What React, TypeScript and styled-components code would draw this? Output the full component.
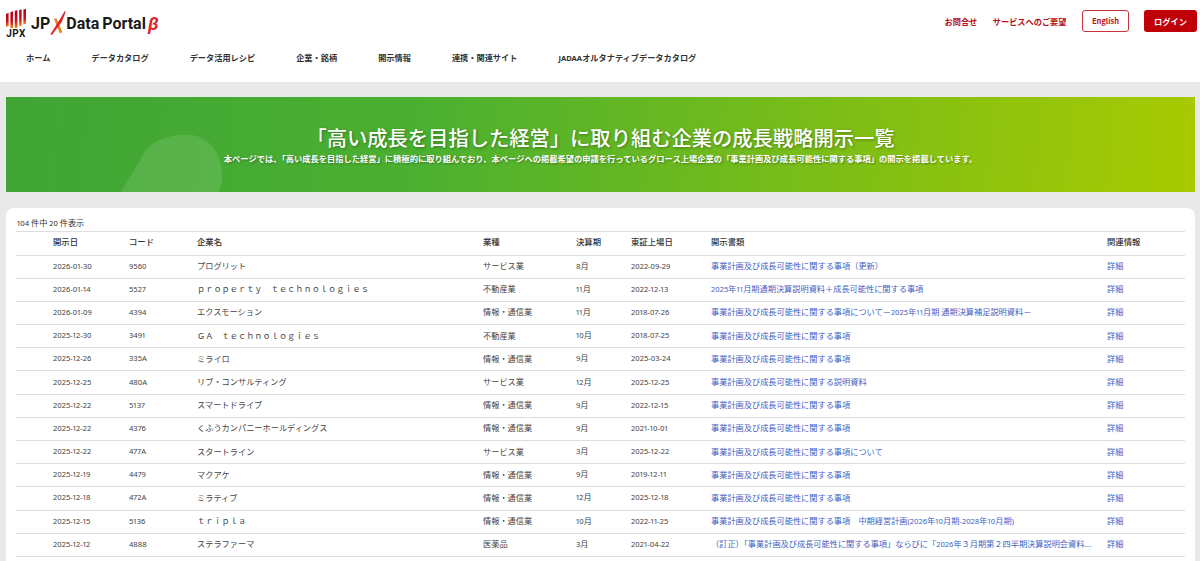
import React from "react";
import styled, { createGlobalStyle } from "styled-components";

const rows = [
  ["2026-01-30", "9560", "プログリット", "サービス業", "8月", "2022-09-29", "事業計画及び成長可能性に関する事項（更新）"],
  ["2026-01-14", "5527", "ｐｒｏｐｅｒｔｙ　ｔｅｃｈｎｏｌｏｇｉｅｓ", "不動産業", "11月", "2022-12-13", "2025年11月期通期決算説明資料＋成長可能性に関する事項"],
  ["2026-01-09", "4394", "エクスモーション", "情報・通信業", "11月", "2018-07-26", "事業計画及び成長可能性に関する事項について－2025年11月期 通期決算補足説明資料－"],
  ["2025-12-30", "3491", "ＧＡ　ｔｅｃｈｎｏｌｏｇｉｅｓ", "不動産業", "10月", "2018-07-25", "事業計画及び成長可能性に関する事項"],
  ["2025-12-26", "335A", "ミライロ", "情報・通信業", "9月", "2025-03-24", "事業計画及び成長可能性に関する事項"],
  ["2025-12-25", "480A", "リブ・コンサルティング", "サービス業", "12月", "2025-12-25", "事業計画及び成長可能性に関する説明資料"],
  ["2025-12-22", "5137", "スマートドライブ", "情報・通信業", "9月", "2022-12-15", "事業計画及び成長可能性に関する事項"],
  ["2025-12-22", "4376", "くふうカンパニーホールディングス", "情報・通信業", "9月", "2021-10-01", "事業計画及び成長可能性に関する事項"],
  ["2025-12-22", "477A", "スタートライン", "サービス業", "3月", "2025-12-22", "事業計画及び成長可能性に関する事項について"],
  ["2025-12-19", "4479", "マクアケ", "情報・通信業", "9月", "2019-12-11", "事業計画及び成長可能性に関する事項"],
  ["2025-12-18", "472A", "ミラティブ", "情報・通信業", "12月", "2025-12-18", "事業計画及び成長可能性に関する事項"],
  ["2025-12-15", "5136", "ｔｒｉｐｌａ", "情報・通信業", "10月", "2022-11-25", "事業計画及び成長可能性に関する事項　中期経営計画(2026年10月期-2028年10月期)"],
  ["2025-12-12", "4888", "ステラファーマ", "医薬品", "3月", "2021-04-22", "（訂正）「事業計画及び成長可能性に関する事項」ならびに「2026年３月期第２四半期決算説明会資料..."],
];

const heads = ["開示日", "コード", "企業名", "業種", "決算期", "東証上場日", "開示書類", "関連情報"];
const widths = [113, 68, 286, 93, 55, 80, 396, 78];
const navItems = ["ホーム", "データカタログ", "データ活用レシピ", "企業・銘柄", "開示情報", "連携・関連サイト", "JADAAオルタナティブデータカタログ"];

// latin and digits sit in a smaller proportional face than the kana
const withNums = (text: string) =>
  text.split(/([0-9A-Z()\-]+)/).map((part, i) =>
    i % 2 === 1 ? <Num key={i}>{part}</Num> : part
  );

const App = () => {
  return (
    <>
      <GlobalStyle />
      <Header>
        <TopBar>
          <LogoBox>
            <JpxMark>
              <svg width="20" height="19" viewBox="0 0 20 19">
                <defs>
                  <linearGradient id="jpxGrad" x1="0" y1="0" x2="0" y2="1">
                    <stop offset="0" stopColor="#b0001c" />
                    <stop offset="0.6" stopColor="#c8101c" />
                    <stop offset="1" stopColor="#f08a1e" />
                  </linearGradient>
                </defs>
                <path d="M0 5 L2.6 3.8 L2.6 17 L0 18 Z" fill="url(#jpxGrad)" />
                <path d="M4.4 3.2 L7 2.2 L7 19 L4.4 19 Z" fill="url(#jpxGrad)" />
                <path d="M8.8 1.8 L11.4 1.2 L11.4 19 L8.8 19 Z" fill="url(#jpxGrad)" />
                <path d="M13.2 1 L15.6 0.6 L15.6 16.5 L13.2 17.5 Z" fill="url(#jpxGrad)" />
                <path d="M17.4 0.4 L20 0 L20 14.5 L17.4 15.5 Z" fill="url(#jpxGrad)" />
              </svg>
              <JpxLabel>JPX</JpxLabel>
            </JpxMark>
            <LogoText>JP</LogoText>
            <CrossMark>
              <svg width="20" height="31" viewBox="0 0 20 31">
                <path d="M5 10 L8 9 L15.5 26 L12.5 28 Z" fill="#e8861c" />
                <path d="M18.5 0 L19.5 1.5 L14.5 14 L2.5 30 L0.5 29 L11 12.5 Z" fill="#e1232b" />
              </svg>
            </CrossMark>
            <LogoText>Data Portal</LogoText>
            <BetaText>β</BetaText>
          </LogoBox>
          <TopActions>
            <TopLink>お問合せ</TopLink>
            <TopLink>サービスへのご要望</TopLink>
            <EnglishButton>English</EnglishButton>
            <LoginButton>ログイン</LoginButton>
          </TopActions>
        </TopBar>
        <NavBar>
          {navItems.map((item) => (
            <NavItem key={item}>{withNums(item)}</NavItem>
          ))}
        </NavBar>
      </Header>
      <Main>
        <Banner>
          <BannerShape>
            <svg width="118" height="58" viewBox="0 0 118 58">
              <path d="M5 58 L30 16 C40 4 60 0 75 1 C95 3 107 22 106 44 C106 50 104 55 103 58 Z" fill="#ffffff" fillOpacity="0.11" />
            </svg>
          </BannerShape>
          <BannerTitle>「高い成長を目指した経営」に取り組む企業の成長戦略開示一覧</BannerTitle>
          <BannerText>
            本ページでは、「高い成長を目指した経営」に積極的に取り組んでおり、本ページへの掲載希望の申請を行っているグロース上場企業の「事業計画及び成長可能性に関する事項」の開示を掲載しています。
          </BannerText>
        </Banner>
        <Card>
          <CountText>{withNums("104 件中 20 件表示")}</CountText>
          <Table>
            <colgroup>
              {widths.map((w, i) => (
                <Col key={i} $w={w} />
              ))}
            </colgroup>
            <thead>
              <tr>
                {heads.map((h) => (
                  <Th key={h}>{h}</Th>
                ))}
              </tr>
            </thead>
            <tbody>
              {rows.map((r) => (
                <tr key={r[1]}>
                  {r.slice(0, 6).map((v, i) => (
                    <Td key={i}>{withNums(v)}</Td>
                  ))}
                  <Td>
                    <DocLink>{withNums(r[6])}</DocLink>
                  </Td>
                  <Td>
                    <DocLink>詳細</DocLink>
                  </Td>
                </tr>
              ))}
            </tbody>
          </Table>
        </Card>
      </Main>
    </>
  );
};

export default App;

const GlobalStyle = createGlobalStyle`
  html, body {
    margin: 0;
    height: 561px;
    overflow: hidden;
    background-color: #e9e9e9;
    font-family: "Noto Sans CJK JP", "Noto Sans", sans-serif;
  }
`;

const Num = styled.span`
  font-family: "Noto Sans", sans-serif;
  font-size: 0.93em;
  font-feature-settings: "pnum";
`;

const Header = styled.header`
  background-color: #ffffff;
  height: 82px;
`;

const TopBar = styled.div`
  display: flex;
  align-items: flex-start;
  justify-content: space-between;
  height: 45px;
  padding: 8px 3px 0 5px;
  box-sizing: border-box;
`;

const LogoBox = styled.div`
  display: flex;
  align-items: center;
  height: 31px;
`;

const JpxMark = styled.div`
  display: flex;
  flex-direction: column;
  align-items: center;
  width: 20px;
  margin: 0 5px 0 1px;
`;

const JpxLabel = styled.span`
  font-family: "Roboto", sans-serif;
  font-size: 10px;
  line-height: 11px;
  font-weight: 700;
  letter-spacing: 0.4px;
  color: #1a1a1a;
`;

const LogoText = styled.span`
  font-family: "Roboto", sans-serif;
  font-size: 16px;
  line-height: 1;
  font-weight: 700;
  word-spacing: -1px;
  color: #1a1a1a;
  white-space: nowrap;
`;

const CrossMark = styled.span`
  display: flex;
  width: 16px;
`;

const BetaText = styled.span`
  font-family: "Roboto", sans-serif;
  font-style: italic;
  font-weight: 700;
  font-size: 18px;
  line-height: 1;
  color: #e1232b;
  margin-left: 2px;
`;

const TopActions = styled.div`
  display: flex;
  align-items: center;
  height: 25px;
`;

const TopLink = styled.a`
  font-size: 8.2px;
  font-weight: 700;
  color: #b8101a;
  margin-right: 15.5px;
  white-space: nowrap;
`;

const EnglishButton = styled.button`
  width: 47px;
  height: 22px;
  margin-right: 15px;
  padding: 0;
  font-family: inherit;
  font-size: 7.5px;
  font-weight: 700;
  color: #b8101a;
  background-color: #ffffff;
  border: 1px solid #c9323a;
  border-radius: 3px;
`;

const LoginButton = styled.button`
  width: 53px;
  height: 22px;
  padding: 0;
  font-family: inherit;
  font-size: 8.2px;
  font-weight: 700;
  color: #ffffff;
  background-color: #c00008;
  border: 0;
  border-radius: 3px;
`;

const NavBar = styled.nav`
  display: flex;
  gap: 41px;
  padding-left: 26px;
  height: 23px;
  align-items: center;
`;

const NavItem = styled.a`
  font-size: 8.2px;
  font-weight: 700;
  color: #333333;
  white-space: nowrap;
`;

const Main = styled.main`
  padding: 15px 5px 0 6px;
`;

const Banner = styled.section`
  position: relative;
  display: flex;
  flex-direction: column;
  align-items: center;
  justify-content: center;
  gap: 3px;
  height: 95px;
  box-sizing: border-box;
  overflow: hidden;
  background: linear-gradient(95deg, #3fa535 0%, #4bb030 35%, #a8ca00 100%);
`;

const BannerShape = styled.div`
  position: absolute;
  left: 110px;
  bottom: 0;
  height: 58px;
`;

const BannerTitle = styled.h1`
  position: relative;
  margin: 0;
  font-size: 20.3px;
  line-height: 24px;
  font-weight: 500;
  color: #ffffff;
  text-shadow: 1px 1px 3px rgba(0, 0, 0, 0.35);
  white-space: nowrap;
`;

const BannerText = styled.p`
  position: relative;
  margin: 0;
  font-size: 8.27px;
  line-height: 12px;
  font-weight: 700;
  color: #ffffff;
  text-shadow: 1px 1px 2px rgba(0, 0, 0, 0.35);
  white-space: nowrap;
`;

const Card = styled.section`
  margin-top: 16px;
  padding: 8px 10px 40px;
  background-color: #ffffff;
  border-radius: 8px 8px 0 0;
`;

const CountText = styled.div`
  padding: 0 0 1.5px 1px;
  font-size: 8.2px;
  line-height: 12px;
  color: #333333;
`;

const Table = styled.table`
  width: 1169px;
  table-layout: fixed;
  border-collapse: collapse;
  border-top: 1px solid #dddddd;
`;

const Col = styled.col<{ $w: number }>`
  width: ${(p) => p.$w}px;
`;

const Th = styled.th`
  height: 19px;
  padding: 0 0 4px;
  font-size: 8.4px;
  font-weight: 500;
  text-align: left;
  color: #333333;
  border-bottom: 1px solid #dddddd;

  &:first-child {
    padding-left: 37px;
  }
`;

const Td = styled.td`
  height: 19.2px;
  padding: 0 0 3px;
  font-size: 8.2px;
  line-height: 12px;
  color: #444444;
  border-bottom: 1px solid #dddddd;
  white-space: nowrap;

  &:first-child {
    padding-left: 37px;
  }
`;

const DocLink = styled.a`
  color: #3f5fc4;
`;
